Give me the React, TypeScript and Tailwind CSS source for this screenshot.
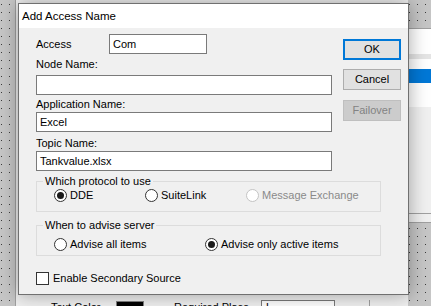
import React from "react";

const font = "font-['Liberation_Sans',Arial,sans-serif]";

const Radio = ({ checked = false, disabled = false, label }: { checked?: boolean; disabled?: boolean; label: string }) => (
  <div className="flex items-center h-[13px]">
    <span
      className={
        disabled
          ? "w-[13px] h-[13px] rounded-full border border-[#c4c4c4] bg-white"
          : "w-[13px] h-[13px] rounded-full border border-[#333333] bg-white flex items-center justify-center"
      }
    >
      {checked && <span className="w-[7px] h-[7px] rounded-full bg-[#1a1a1a]" />}
    </span>
    <span className={disabled ? "ml-[3px] text-[#8a8a8a]" : "ml-[3px] text-black"}>{label}</span>
  </div>
);

const Field = ({ value, className }: { value: string; className: string }) => (
  <div className={"h-[20px] border border-[#7a7a7a] bg-white pl-[3px] flex items-center " + className}>{value}</div>
);

const Dots = () => (
  <svg className="absolute inset-0" width="431" height="306">
    <defs>
      <pattern id="dots" x="1" y="4" width="8" height="8" patternUnits="userSpaceOnUse">
        <rect width="1" height="1" fill="#3a3a3a" />
      </pattern>
    </defs>
    <rect width="431" height="306" fill="#c6c6c6" />
    <rect width="431" height="306" fill="url(#dots)" />
  </svg>
);

export default function App() {
  return (
    <div className={"relative w-[431px] h-[306px] overflow-hidden text-[11px] leading-[13px] text-black " + font}>
      <Dots />

      {/* window behind, left */}
      <div className="absolute left-[15px] top-0 w-[393px] h-[306px] bg-[#f0f0f0] border-l border-[#a0a0a0]">
        <div className="flex items-center mt-[300px] h-[14px]">
          <span className="ml-[35px] w-[65px]">Text Color</span>
          <span className="w-[28px] h-[12px] border border-[#808080] bg-black" />
          <span className="ml-[30px] w-[87px]">Required Place</span>
          <span className="w-[74px] h-[14px] border border-[#7a7a7a] bg-white pl-[4px]">L</span>
          <span className="ml-[34px] h-[14px] border-l border-[#a0a0a0]" />
        </div>
      </div>

      {/* window behind, right */}
      <div className="absolute left-[300px] top-[28px] w-[140px] h-[195px] bg-[#f0f0f0] border border-[#a0a0a0] flex flex-col">
        <div className="h-[25px] bg-white" />
        <div className="h-[5px] bg-[#e5e5e5]" />
        <div className="h-[10px] bg-white" />
        <div className="h-[14px] bg-[#0078d7]" />
        <div className="h-[24px] bg-white" />
        <div className="flex-1" />
        <div className="h-[9px] border-t border-[#a0a0a0] bg-[#f0f0f0]" />
      </div>

      {/* dialog */}
      <div className="absolute left-[18px] top-[3px] w-[391px] h-[292px] border border-[#707070] bg-[#f0f0f0] shadow-[0_0_18px_rgba(0,0,0,0.35)] flex flex-col">
        <div className="h-[24px] bg-white flex items-center pl-[3px] text-[11.5px]">Add Access Name</div>

        <div className="flex-1 pt-[6px] pl-[17px]">
          <div className="flex">
            <div className="w-[296px] flex flex-col">
              <div className="flex items-center h-[20px]">
                <span className="w-[73px]">Access</span>
                <Field value="Com" className="w-[98px]" />
              </div>
              <span className="mt-[4px]">Node Name:</span>
              <Field value="" className="mt-[4px]" />
              <span className="mt-[3px]">Application Name:</span>
              <Field value="Excel" className="mt-[1px]" />
              <span className="mt-[5px]">Topic Name:</span>
              <Field value="Tankvalue.xlsx" className="mt-[1px]" />
            </div>

            <div className="ml-[11px] mt-[5px] w-[58px] flex flex-col">
              <button className="h-[21px] border-2 border-[#0078d7] bg-[#e1e1e1]">OK</button>
              <button className="mt-[9px] h-[21px] border border-[#adadad] bg-[#e1e1e1]">Cancel</button>
              <button className="mt-[10px] h-[21px] border border-[#bfbfbf] bg-[#cccccc] text-[#838383]">Failover</button>
            </div>
          </div>

          <fieldset className="mt-[4px] w-[345px] border border-[#dcdcdc] pl-[6px] pb-[9px]">
            <legend className="px-[2px]">Which protocol to use</legend>
            <div className="flex mt-[1px] ml-[11px]">
              <div className="w-[91px]"><Radio checked label="DDE" /></div>
              <div className="w-[101px]"><Radio label="SuiteLink" /></div>
              <Radio disabled label="Message Exchange" />
            </div>
          </fieldset>

          <fieldset className="mt-[7px] w-[345px] border border-[#dcdcdc] pl-[6px] pb-[4px]">
            <legend className="px-[2px]">When to advise server</legend>
            <div className="flex mt-[6px] ml-[11px]">
              <div className="w-[151px]"><Radio label="Advise all items" /></div>
              <Radio checked label="Advise only active items" />
            </div>
          </fieldset>

          <div className="mt-[16px] flex items-center h-[13px]">
            <span className="w-[13px] h-[13px] border border-[#333333] bg-white" />
            <span className="ml-[4px]">Enable Secondary Source</span>
          </div>
        </div>
      </div>
    </div>
  );
}
